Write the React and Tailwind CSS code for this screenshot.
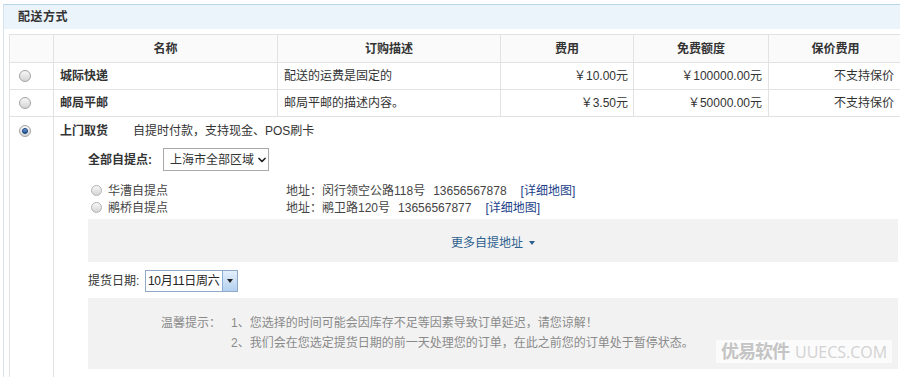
import { ChevronDown } from 'lucide-react';

const Radio = ({ checked, small }) => (
  <span
    className={`relative inline-block shrink-0 rounded-full border ${small ? 'w-[11px] h-[11px] border-[#b5b5b5]' : 'w-[12px] h-[12px] border-[#a3a3a3]'} bg-gradient-to-b from-[#f7f7f7] to-[#d4d4d4]`}
  >
    {checked && (
      <span className="absolute inset-[2px] rounded-full bg-gradient-to-b from-[#6f9fd6] to-[#1f4f8f] border border-[#1c4780]"></span>
    )}
  </span>
);

const rows = [
  { name: '城际快递', desc: '配送的运费是固定的', fee: '￥10.00元', free: '￥100000.00元', insure: '不支持保价' },
  { name: '邮局平邮', desc: '邮局平邮的描述内容。', fee: '￥3.50元', free: '￥50000.00元', insure: '不支持保价' },
];

const pickups = [
  { name: '华漕自提点', addr: '地址：闵行领空公路118号', tel: '13656567878' },
  { name: '鹇桥自提点', addr: '地址：鹇卫路120号', tel: '13656567877' },
];

const App = () => {
  return (
    <div className="relative w-[900px] h-[377px] overflow-hidden bg-white text-[12px] text-[#333] font-['Liberation_Sans','Noto_Sans_CJK_SC',sans-serif]">
      {/* Panel */}
      <div className="mt-[4px] ml-[3px] w-[905px] h-[400px] border-t border-l border-t-[#b8d4e8] border-l-[#d6e3ec]">
        <div className="h-[24px] bg-[#ebf4fb] flex items-center pl-[14px] font-bold text-[#333] tracking-[0.5px]">
          配送方式
        </div>

        <table className="mt-[5px] ml-[5px] w-[893px] border-collapse table-fixed">
          <colgroup>
            <col className="w-[44px]" />
            <col className="w-[224px]" />
            <col className="w-[223px]" />
            <col className="w-[133px]" />
            <col className="w-[135px]" />
            <col className="w-[134px]" />
          </colgroup>
          <thead>
            <tr className="h-[28px] bg-[#fafafa]">
              <th className="border border-[#e2e2e2]"></th>
              <th className="border border-[#e2e2e2] font-bold text-center">名称</th>
              <th className="border border-[#e2e2e2] font-bold text-center">订购描述</th>
              <th className="border border-[#e2e2e2] font-bold text-center">费用</th>
              <th className="border border-[#e2e2e2] font-bold text-center">免费额度</th>
              <th className="border border-[#e2e2e2] font-bold text-center">保价费用</th>
            </tr>
          </thead>
          <tbody>
            {rows.map((r) => (
              <tr key={r.name} className="h-[27px]">
                <td className="border border-[#e2e2e2] pl-[9px] align-middle">
                  <span className="flex"><Radio /></span>
                </td>
                <td className="border border-[#e2e2e2] pl-[6px] font-bold">{r.name}</td>
                <td className="border border-[#e2e2e2] pl-[6px]">{r.desc}</td>
                <td className="border border-[#e2e2e2] pr-[5px] text-right">{r.fee}</td>
                <td className="border border-[#e2e2e2] pr-[6px] text-right">{r.free}</td>
                <td className="border border-[#e2e2e2] pr-[8px] text-right">{r.insure}</td>
              </tr>
            ))}
            <tr>
              <td className="border border-[#e2e2e2] pl-[9px] align-top">
                <span className="flex h-[28px] items-center"><Radio checked /></span>
              </td>
              <td colSpan={5} className="border border-[#e2e2e2] align-top">
                <div className="flex flex-col pb-[40px]">
                  <div className="h-[28px] flex items-center pl-[6px]">
                    <span className="font-bold">上门取货</span>
                    <span className="ml-[25px]">自提时付款，支持现金、POS刷卡</span>
                  </div>

                  <div className="ml-[34px] flex flex-col">
                    <div className="mt-[3px] flex items-center h-[23px]">
                      <span className="w-[75px] shrink-0 font-bold whitespace-nowrap">全部自提点:</span>
                      <span className="w-[106px] shrink-0 h-[23px] border border-[#a9a9a9] flex items-center gap-[2px] pl-[6px] pr-[3px] bg-white whitespace-nowrap">
                        上海市全部区域
                        <ChevronDown size={12} strokeWidth={3.5} className="text-[#222] shrink-0" />
                      </span>
                    </div>

                    <div className="mt-[11px] flex flex-col">
                      {pickups.map((p) => (
                        <div key={p.name} className="h-[17px] flex items-center text-[#444] whitespace-nowrap">
                          <span className="ml-[3px] flex"><Radio small /></span>
                          <span className="ml-[6px] w-[178px]">{p.name}</span>
                          <span>{p.addr}</span>
                          <span className="ml-[8px]">{p.tel}</span>
                          <span className="ml-[14px] text-[#1d3f8a]">[详细地图]</span>
                        </div>
                      ))}
                    </div>

                    <div className="mt-[3px] w-[810px] h-[43px] bg-[#f2f2f2] flex items-center justify-center pt-[4px] text-[#2d5f8f]">
                      更多自提地址
                      <span className="ml-[6px] w-0 h-0 border-l-[3px] border-r-[3px] border-t-[4px] border-l-transparent border-r-transparent border-t-[#2d5f8f]"></span>
                    </div>

                    <div className="mt-[8px] flex items-center h-[22px]">
                      <span className="w-[57px] shrink-0 whitespace-nowrap">提货日期:</span>
                      <span className="w-[93px] shrink-0 h-[22px] border border-[#8fa9c6] flex items-stretch bg-white">
                        <span className="flex-1 flex items-center pl-[2px] text-[#222] whitespace-nowrap overflow-hidden tracking-[-0.3px]">10月11日周六</span>
                        <span className="w-[15px] shrink-0 border-l border-[#8aaed6] bg-gradient-to-b from-[#e4effb] to-[#b3d0ef] flex items-center justify-center">
                          <span className="w-0 h-0 border-l-[3px] border-r-[3px] border-t-[4px] border-l-transparent border-r-transparent border-t-[#222]"></span>
                        </span>
                      </span>
                    </div>

                    <div className="mt-[6px] w-[810px] h-[71px] bg-[#f2f2f2] pt-[15px] flex text-[#8a8a8a] leading-[20px] whitespace-nowrap">
                      <span className="ml-[73px] w-[70px]">温馨提示：</span>
                      <div className="flex flex-col">
                        <span>1、您选择的时间可能会因库存不足等因素导致订单延迟，请您谅解！</span>
                        <span>2、我们会在您选定提货日期的前一天处理您的订单，在此之前您的订单处于暂停状态。</span>
                      </div>
                    </div>
                  </div>
                </div>
              </td>
            </tr>
          </tbody>
        </table>
      </div>

      {/* Watermark */}
      <div className="absolute left-[716px] top-[340px] w-[176px] h-[23px] bg-white/70 flex items-center pl-[5px] gap-[6px]">
        <span className="text-[18px] font-bold text-[#c4c4c4] leading-none tracking-[-1px]">优易软件</span>
        <span className="text-[16px] text-[#d2d2d2] leading-none font-['Open_Sans','Liberation_Sans',sans-serif]">UUECS.COM</span>
      </div>
    </div>
  );
};

export default App;
